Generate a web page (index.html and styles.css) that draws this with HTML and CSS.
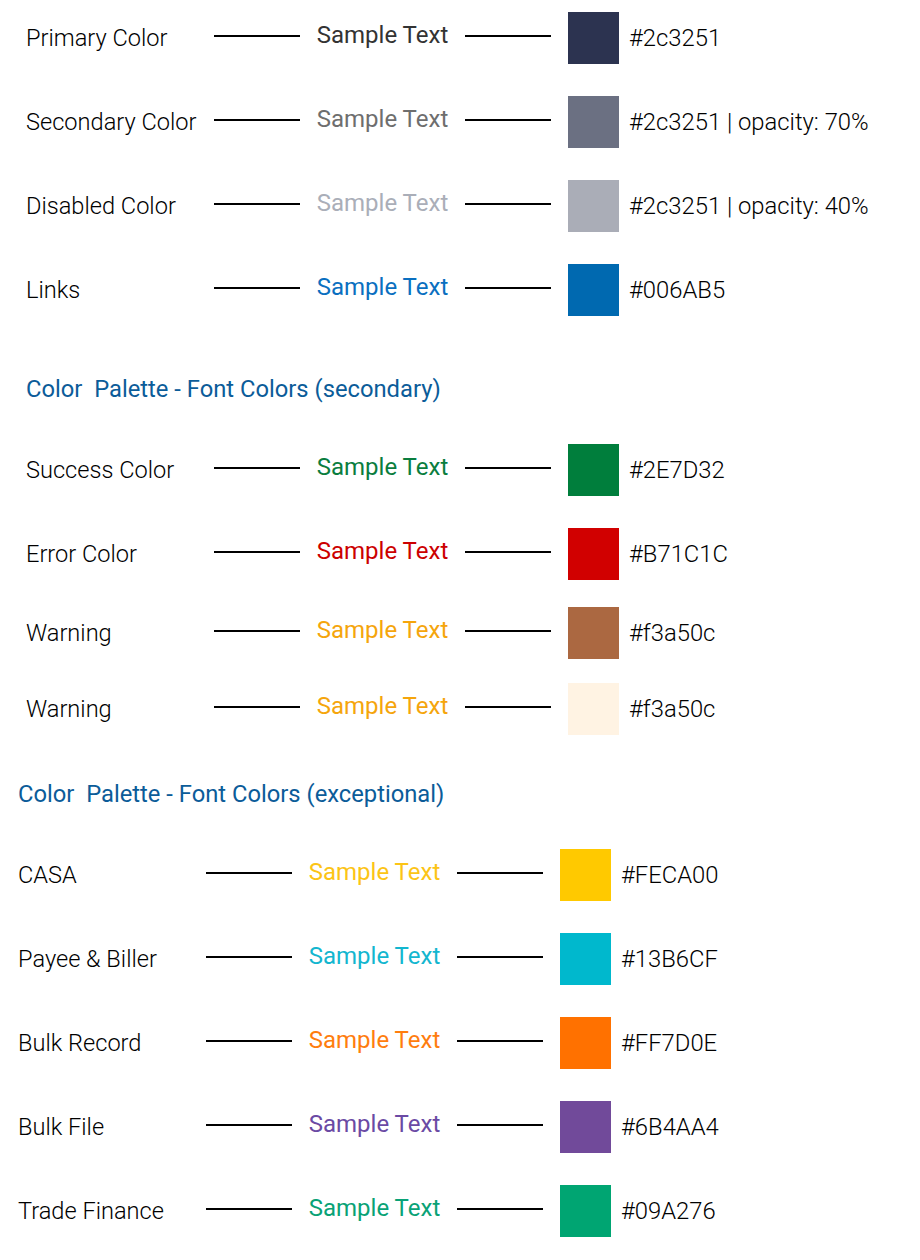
FILE: index.html
```html
<!DOCTYPE html>
<html>
<head>
<meta charset="utf-8">
<link rel="stylesheet" href="styles.css">
</head>
<body>
<div class="page">
  <section class="group group-main">
    <div class="row">
      <span class="label">Primary Color</span><span class="rule"></span>
      <span class="sample c-primary">Sample Text</span><span class="rule"></span>
      <span class="swatch s-primary"></span><span class="hex">#2c3251</span>
    </div>
    <div class="row">
      <span class="label">Secondary Color</span><span class="rule"></span>
      <span class="sample c-secondary">Sample Text</span><span class="rule"></span>
      <span class="swatch s-secondary"></span><span class="hex">#2c3251 | opacity: 70%</span>
    </div>
    <div class="row">
      <span class="label">Disabled Color</span><span class="rule"></span>
      <span class="sample c-disabled">Sample Text</span><span class="rule"></span>
      <span class="swatch s-disabled"></span><span class="hex">#2c3251 | opacity: 40%</span>
    </div>
    <div class="row">
      <span class="label">Links</span><span class="rule"></span>
      <span class="sample c-link">Sample Text</span><span class="rule"></span>
      <span class="swatch s-link"></span><span class="hex">#006AB5</span>
    </div>
  </section>

  <h2 class="heading heading-secondary">Color&nbsp; Palette - Font Colors (secondary)</h2>
  <section class="group group-secondary">
    <div class="row">
      <span class="label">Success Color</span><span class="rule"></span>
      <span class="sample c-success">Sample Text</span><span class="rule"></span>
      <span class="swatch s-success"></span><span class="hex">#2E7D32</span>
    </div>
    <div class="row">
      <span class="label">Error Color</span><span class="rule"></span>
      <span class="sample c-error">Sample Text</span><span class="rule"></span>
      <span class="swatch s-error"></span><span class="hex">#B71C1C</span>
    </div>
    <div class="row row-tight1">
      <span class="label">Warning</span><span class="rule"></span>
      <span class="sample c-warning">Sample Text</span><span class="rule"></span>
      <span class="swatch s-warning"></span><span class="hex">#f3a50c</span>
    </div>
    <div class="row row-tight2">
      <span class="label">Warning</span><span class="rule"></span>
      <span class="sample c-warning">Sample Text</span><span class="rule"></span>
      <span class="swatch s-warning-light"></span><span class="hex">#f3a50c</span>
    </div>
  </section>

  <h2 class="heading heading-exceptional">Color&nbsp; Palette - Font Colors (exceptional)</h2>
  <section class="group group-exceptional">
    <div class="row">
      <span class="label">CASA</span><span class="rule"></span>
      <span class="sample c-casa">Sample Text</span><span class="rule"></span>
      <span class="swatch s-casa"></span><span class="hex">#FECA00</span>
    </div>
    <div class="row">
      <span class="label">Payee &amp; Biller</span><span class="rule"></span>
      <span class="sample c-payee">Sample Text</span><span class="rule"></span>
      <span class="swatch s-payee"></span><span class="hex">#13B6CF</span>
    </div>
    <div class="row">
      <span class="label">Bulk Record</span><span class="rule"></span>
      <span class="sample c-bulkrec">Sample Text</span><span class="rule"></span>
      <span class="swatch s-bulkrec"></span><span class="hex">#FF7D0E</span>
    </div>
    <div class="row">
      <span class="label">Bulk File</span><span class="rule"></span>
      <span class="sample c-bulkfile">Sample Text</span><span class="rule"></span>
      <span class="swatch s-bulkfile"></span><span class="hex">#6B4AA4</span>
    </div>
    <div class="row">
      <span class="label">Trade Finance</span><span class="rule"></span>
      <span class="sample c-trade">Sample Text</span><span class="rule"></span>
      <span class="swatch s-trade"></span><span class="hex">#09A276</span>
    </div>
  </section>
</div>
</body>
</html>
```

FILE: styles.css
```css
* { box-sizing: border-box; }

html, body {
  margin: 0;
  padding: 0;
  background: #ffffff;
}

body {
  font-family: Roboto, "Liberation Sans", sans-serif;
  color: #000000;
}

.page {
  width: 920px;
  padding-top: 12px;
}

.group {
  display: flex;
  flex-direction: column;
  gap: 32px;
}

.group-main,
.group-secondary {
  padding-left: 26px;
}

.group-exceptional {
  padding-left: 18px;
}

.row {
  display: flex;
  align-items: center;
  height: 52px;
}

.group-secondary .row-tight1 { margin-top: -5px; }
.group-secondary .row-tight2 { margin-top: -8px; }

.label {
  width: 188px;
  font-size: 23.6px;
  font-weight: 300;
  line-height: 28px;
  color: #000000;
  white-space: nowrap;
}

.rule {
  width: 86px;
  height: 2px;
  background: #000000;
  margin-bottom: 4px;
}

.sample {
  width: 165px;
  text-align: center;
  font-size: 24px;
  font-weight: 400;
  line-height: 28px;
  margin-bottom: 6px;
  white-space: nowrap;
}

.swatch {
  width: 51px;
  height: 52px;
  margin-left: 17px;
  flex: none;
}

.hex {
  margin-left: 10px;
  font-size: 23.8px;
  font-weight: 300;
  line-height: 28px;
  color: #000000;
  white-space: nowrap;
}

.heading {
  margin: 0;
  font-size: 23.75px;
  font-weight: 400;
  line-height: 28px;
  color: #0b5c99;
  white-space: nowrap;
}

.heading-secondary {
  padding-left: 26px;
  margin-top: 59px;
  margin-bottom: 41px;
}

.heading-exceptional {
  padding-left: 18px;
  margin-top: 45px;
  margin-bottom: 41px;
}

/* sample text colours */
.c-primary   { color: #333333; }
.c-secondary { color: #6e6e6e; }
.c-disabled  { color: #aaaeb8; }
.c-link      { color: #0a6fc0; }
.c-success   { color: #0a7d3e; }
.c-error     { color: #cc0000; }
.c-warning   { color: #f5a50c; }
.c-casa      { color: #fcc416; }
.c-payee     { color: #13b6cf; }
.c-bulkrec   { color: #ff7d0e; }
.c-bulkfile  { color: #6b4aa4; }
.c-trade     { color: #09a276; }

/* swatch colours */
.s-primary     { background: #2c3350; }
.s-secondary   { background: #6b7082; }
.s-disabled    { background: #aaadb7; }
.s-link        { background: #0069b0; }
.s-success     { background: #007e3c; }
.s-error       { background: #d10000; }
.s-warning     { background: #ab6841; }
.s-warning-light { background: #fff3e3; }
.s-casa        { background: #ffc900; }
.s-payee       { background: #00b8cd; }
.s-bulkrec     { background: #ff7100; }
.s-bulkfile    { background: #714a9a; }
.s-trade       { background: #00a572; }
```
